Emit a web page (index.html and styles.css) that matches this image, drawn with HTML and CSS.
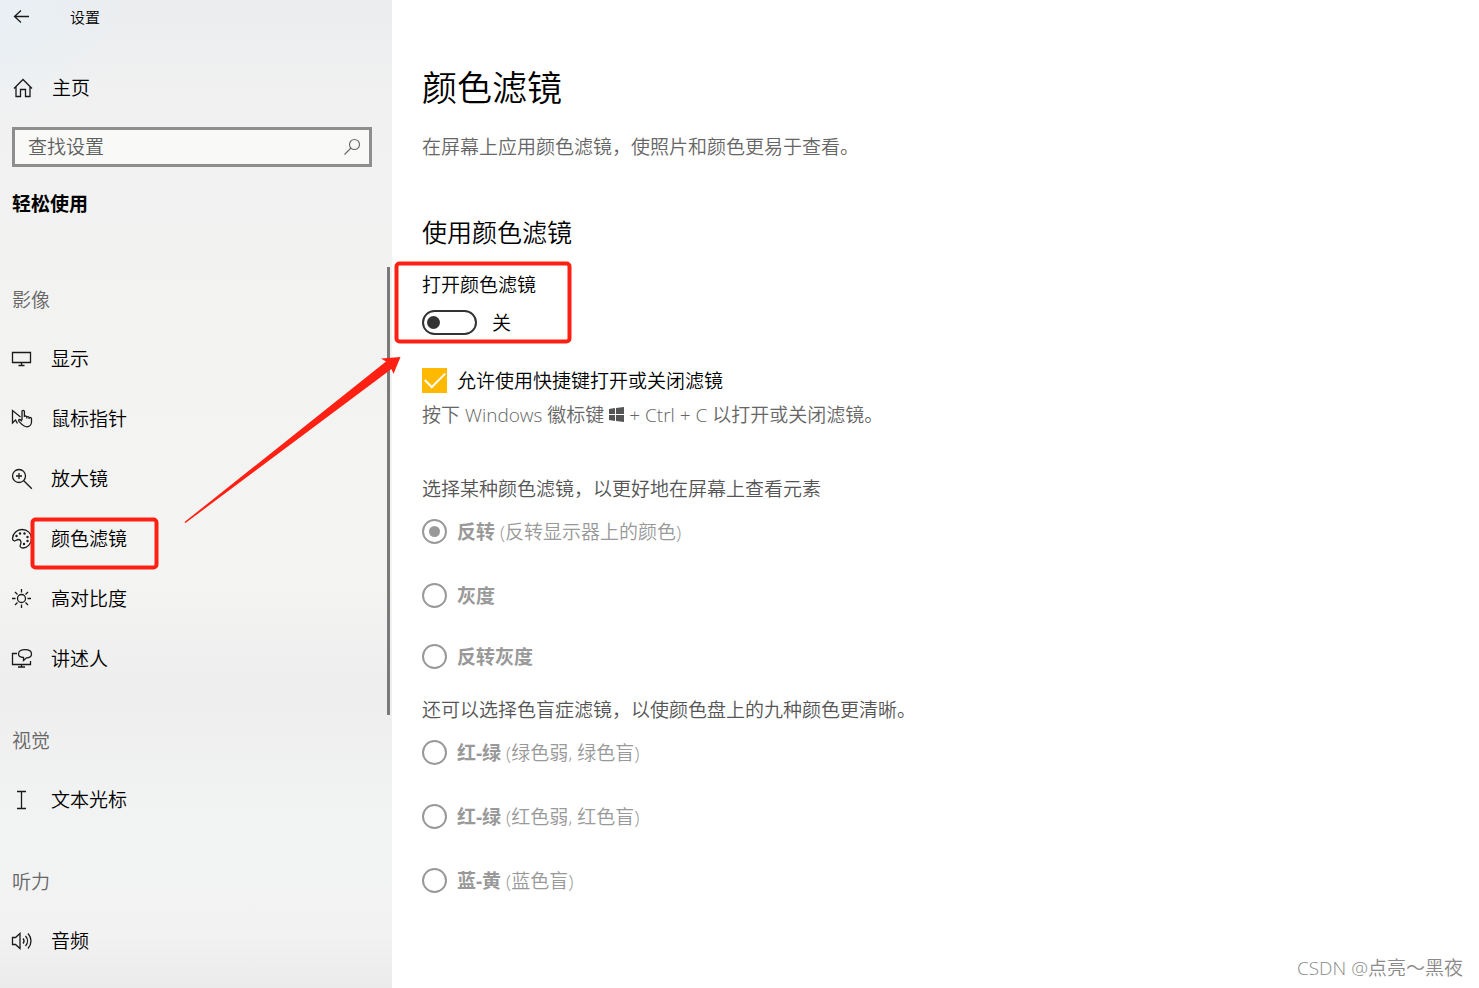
FILE: index.html
```html
<!DOCTYPE html>
<html lang="zh-CN">
<head>
    <meta charset="UTF-8">
    <meta name="viewport" content="width=device-width, initial-scale=1.0">
    <title>设置</title>
    <link rel="stylesheet" href="styles.css">
</head>
<body>
    <div class="app">
        <aside class="sidebar">
            <header class="titlebar">
                <button class="back" aria-label="返回">
                    <svg class="icon" viewBox="0 0 22 22"><path d="M17 10.5H2.5M9 4.5l-6.5 6L9 16.5"/></svg>
                </button>
                <span class="titlebar-text">设置</span>
            </header>
            <a class="nav-item home" href="#">
                <svg class="icon" viewBox="0 0 22 22"><path d="M2 11.5L11 2.5l9 9M4 10V19.500h4.500v-7h5v7H18V10"/></svg>
                <span>主页</span>
            </a>
            <div class="search">
                <input type="text" id="search" placeholder="查找设置" aria-label="查找设置">
                <svg class="search-icon" viewBox="0 0 18 18"><circle cx="11.500" cy="6.500" r="5"/><path d="M8 10L1.500 16.500"/></svg>
            </div>
            <h3 class="section-title">轻松使用</h3>

            <nav class="nav">
                <h4 class="nav-heading">影像</h4>
                <a class="nav-item" href="#">
                    <svg class="icon" viewBox="0 0 22 22"><path d="M1.500 4.500h18v10h-18zM10.500 14.500v3M7.500 17.500h6"/></svg>
                    <span>显示</span>
                </a>
                <a class="nav-item" href="#">
                    <svg class="icon" viewBox="0 0 22 22"><path d="M9.500 9L1.500 2.500v12.500l3-3 2 3.500M11 12V3.500a1.200 1.200 0 0 1 2.400 0V9M13.400 8.500c1-1 2.400-.5 2.400 1v1M15.800 9c1-1 2.300 0 2.300 1v1M18.100 9.800c1-.8 2.400 0 2.400 1v3c0 3-2 5-4.500 5-3.500 0-5-2-8-5.500-1-1.500.5-2.500 2-1l1 1"/></svg>
                    <span>鼠标指针</span>
                </a>
                <a class="nav-item" href="#">
                    <svg class="icon" viewBox="0 0 22 22"><circle cx="8" cy="8" r="6.500"/><path d="M12.800 12.800l8 8M8 5v6M5 8h6"/></svg>
                    <span>放大镜</span>
                </a>
                <a class="nav-item" href="#">
                    <svg class="icon" viewBox="0 0 22 22"><path d="M1.500 10.500C2 5 6 1.500 11 1.500c5.500 0 9.500 4 9.500 9s-4 9.500-8.500 9.500c-2.500 0-3.500-1.500-2.500-3.500s.5-5-2-5c-2 0-2.500 1.500-4 1.500-1.500-.5-2-1.500-2-2.500z"/><g class="dots"><circle cx="5.500" cy="8" r="1.200"/><circle cx="9" cy="5.500" r="1.200"/><circle cx="13.500" cy="5.500" r="1.200"/><circle cx="16.500" cy="9" r="1.200"/><circle cx="16.500" cy="13" r="1.200"/><circle cx="13" cy="16" r="1.200"/></g></svg>
                    <span>颜色滤镜</span>
                </a>
                <a class="nav-item" href="#">
                    <svg class="icon" viewBox="0 0 22 22"><circle cx="10.500" cy="10.500" r="4"/><path d="M10.500 1v3.500M10.500 16.500V20M1 10.500h3.500M16.500 10.500H20M4 4l2.500 2.500M14.500 14.500L17 17M4 17l2.500-2.500M14.500 6.500L17 4"/></svg>
                    <span>高对比度</span>
                </a>
                <a class="nav-item" href="#">
                    <svg class="icon" viewBox="0 0 22 22"><path d="M6 5.500H1.500v11h18V13M10.500 16.500v2.500M7 19h7M12.500 9.500C9.500 9.300 7.500 8 7.500 6c0-2.500 2.500-4.300 6.500-4.300s6.500 1.800 6.500 4.300-2.500 3.800-5 3.800L12.500 12.500z"/></svg>
                    <span>讲述人</span>
                </a>
                <h4 class="nav-heading">视觉</h4>
                <a class="nav-item" href="#">
                    <svg class="icon" viewBox="0 0 22 22"><path d="M6 2.500h9M6 19.500h9M10.500 2.500v17"/></svg>
                    <span>文本光标</span>
                </a>
                <h4 class="nav-heading">听力</h4>
                <a class="nav-item" href="#">
                    <svg class="icon" viewBox="0 0 22 22"><path d="M1.500 7.500h3L9 3.500v15l-4.500-4h-3zM12 8.500c1.300 1.500 1.300 3.500 0 5M14.500 6c2.700 3 2.700 7 0 10M17 3.500c4 4.500 4 10.500 0 15"/></svg>
                    <span>音频</span>
                </a>
                <div class="scroll-thumb"></div>
            </nav>
        </aside>

        <main class="content">
            <h1>颜色滤镜</h1>
            <p class="intro">在屏幕上应用颜色滤镜，使照片和颜色更易于查看。</p>

            <h2>使用颜色滤镜</h2>
            <label class="toggle-label" for="filter-toggle">打开颜色滤镜</label>
            <div class="toggle-row">
                <input type="checkbox" class="toggle" id="filter-toggle">
                <span>关</span>
            </div>

            <div class="option">
                <input type="checkbox" class="check" id="shortcut" checked>
                <label for="shortcut">允许使用快捷键打开或关闭滤镜</label>
            </div>
            <p class="hint">按下 Windows 徽标键 <svg class="win" viewBox="0 0 15 15"><path d="M0 2l6-1v6H0zM7 1l8-1v7H7zM0 8h6v6l-6-1zM7 8h8v7l-8-1z"/></svg> + Ctrl + C 以打开或关闭滤镜。</p>

            <p class="group-text">选择某种颜色滤镜，以更好地在屏幕上查看元素</p>
            <div class="radios tight-end">
                <div class="option disabled">
                    <input type="radio" name="filter" class="radio" id="invert" checked disabled>
                    <label for="invert"><b>反转</b> (反转显示器上的颜色)</label>
                </div>
                <div class="option disabled">
                    <input type="radio" name="filter" class="radio" id="gray" disabled>
                    <label for="gray"><b>灰度</b></label>
                </div>
                <div class="option disabled">
                    <input type="radio" name="filter" class="radio" id="gray-invert" disabled>
                    <label for="gray-invert"><b>反转灰度</b></label>
                </div>
            </div>

            <p class="group-text second">还可以选择色盲症滤镜，以使颜色盘上的九种颜色更清晰。</p>
            <div class="radios">
                <div class="option disabled">
                    <input type="radio" name="filter" class="radio" id="deuter" disabled>
                    <label for="deuter"><b>红-绿</b> (绿色弱, 绿色盲)</label>
                </div>
                <div class="option disabled">
                    <input type="radio" name="filter" class="radio" id="prot" disabled>
                    <label for="prot"><b>红-绿</b> (红色弱, 红色盲)</label>
                </div>
                <div class="option disabled">
                    <input type="radio" name="filter" class="radio" id="trit" disabled>
                    <label for="trit"><b>蓝-黄</b> (蓝色盲)</label>
                </div>
            </div>
        </main>

        <!-- red marks drawn over the page -->
        <svg class="marks" width="600" height="600" viewBox="0 0 600 600">
            <rect x="32.500" y="519.500" width="124" height="48" rx="3"/>
            <rect x="396.500" y="263.500" width="173" height="78" rx="3"/>
            <path d="M184.500 522L386 361.500l-5-3 19.500-1.500-7 17-2-5L185.500 523z"/>
        </svg>
        <div class="watermark">CSDN @点亮～黑夜</div>
    </div>
</body>
</html>
```
FILE: styles.css
```css
* {
    box-sizing: border-box;
}
body {
    margin: 0;
    font-family: "Open Sans", "Noto Sans CJK SC", sans-serif;
    font-size: 19px;
    font-weight: 350;
    line-height: 24px;
    color: #000;
    background: #fff;
}
h1, h2, h3, h4, p {
    margin: 0;
    font-weight: inherit;
}
b {
    font-weight: 700;
}
.app {
    position: relative;
    display: flex;
    min-height: 100vh;
}

/* sidebar */
.sidebar {
    flex: 0 0 392px;
    padding: 0 20px 16px 12px;
    background:
        radial-gradient(circle at 0 0, #e9f0f5, transparent 130px),
        linear-gradient(#ebedef, #f1f1f1 100px, #f3f3f2 400px, #f4f4f3 570px, #eeeeee 690px, #f2f3f3 830px, #f2f2f2 930px, #ebebeb);
}
.titlebar {
    display: flex;
    align-items: center;
    height: 34px;
}
.back {
    display: flex;
    padding: 0;
    border: none;
    background: none;
}
.titlebar-text {
    margin-left: 36px;
    font-size: 15px;
}
.icon {
    width: 22px;
    height: 22px;
    flex: none;
    fill: none;
    stroke: #1a1a1a;
    stroke-width: 1.3;
}
.dots {
    fill: #1a1a1a;
    stroke: none;
}
.nav-item {
    display: flex;
    align-items: center;
    gap: 18px;
    height: 60px;
    color: #000;
    text-decoration: none;
}
.nav .nav-item {
    margin-left: -1px;
}
.home {
    margin-top: 24px;
}
.search {
    display: flex;
    align-items: center;
    height: 40px;
    margin-top: 9px;
    padding: 0 8px 0 13px;
    border: 3px solid #8e8e8e;
    background: #f9f9f8;
}
.search input {
    flex: 1;
    min-width: 0;
    padding: 0;
    border: none;
    outline: none;
    background: none;
    font: inherit;
}
.search input::placeholder {
    color: #5f5f5f;
    opacity: 1;
}
.search-icon {
    width: 18px;
    height: 18px;
    fill: none;
    stroke: #666;
    stroke-width: 1.1;
}
.section-title {
    margin-top: 25px;
    font-size: 19px;
    font-weight: 700;
}
.nav {
    position: relative;
    margin-top: 32px;
}
.nav-heading {
    padding: 40px 0 17px;
    font-size: 19px;
    color: #666;
}
.scroll-thumb {
    position: absolute;
    top: 19px;
    right: -18px;
    width: 3px;
    height: 448px;
    background: #7a7a7a;
}

/* content */
.content {
    flex: 1;
    min-width: 0;
    padding: 64px 30px 40px;
}
h1 {
    font-size: 35px;
    line-height: 48px;
}
h2 {
    margin-top: 57px;
    font-size: 25px;
    line-height: 32px;
}
.intro {
    margin-top: 23px;
    color: #666;
}
.toggle-label {
    display: block;
    margin-top: 25px;
}
.toggle-row {
    display: flex;
    align-items: center;
    gap: 15px;
    margin-top: 13px;
}
.toggle,
.check,
.radio {
    appearance: none;
    display: flex;
    align-items: center;
    flex: none;
    width: 25px;
    height: 25px;
    margin: 0;
}
.toggle {
    width: 55px;
    padding-left: 3px;
    border: 2px solid #333;
    border-radius: 13px;
}
.toggle::after {
    content: "";
    width: 13px;
    height: 13px;
    border-radius: 50%;
    background: #333;
}
.option {
    display: flex;
    align-items: center;
    gap: 10px;
}
.toggle-row + .option {
    margin-top: 33px;
}
.check {
    justify-content: center;
    background: #ffb900;
}
.check::after {
    content: "";
    width: 18px;
    height: 9px;
    margin-top: -6px;
    border-left: 2px solid #fff;
    border-bottom: 2px solid #fff;
    transform: rotate(-45deg);
}
.hint {
    margin-top: 10px;
    color: #666;
}
.win {
    width: 15px;
    height: 15px;
    fill: #555;
}
.group-text {
    margin-top: 50px;
    color: #555;
}
.radios {
    display: flex;
    flex-direction: column;
    gap: 39px;
    margin-top: 18px;
}
.tight-end .option:last-child {
    margin-top: -3px;
}
.second {
    margin-top: 29px;
}
.radio {
    justify-content: center;
    border: 2px solid #999;
    border-radius: 50%;
}
.radio:checked::after {
    content: "";
    width: 11px;
    height: 11px;
    border-radius: 50%;
    background: #999;
}
.disabled {
    color: #999;
}

.marks {
    position: absolute;
    top: 0;
    left: 0;
    pointer-events: none;
    fill: none;
    stroke: #ff2014;
    stroke-width: 4;
}
.marks path {
    fill: #ff2014;
    stroke: none;
}
.watermark {
    position: absolute;
    right: 16px;
    bottom: 8px;
    color: #8a8a8a;
}
```
